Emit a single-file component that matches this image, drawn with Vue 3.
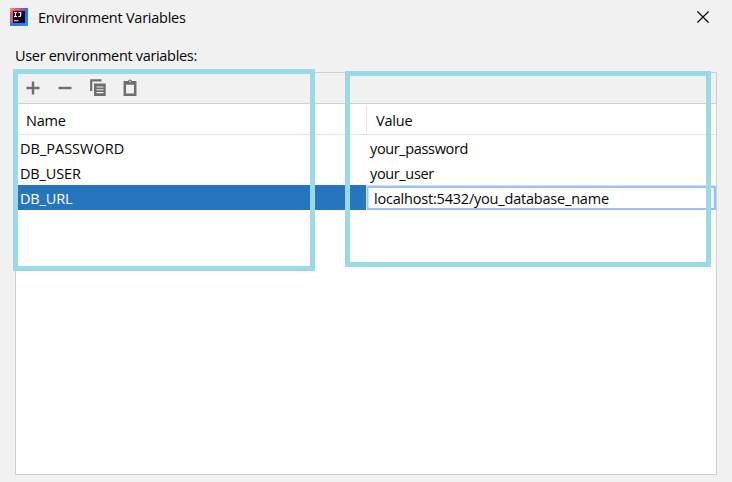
<script setup>
const variables = [
  { name: 'DB_PASSWORD', value: 'your_password' },
  { name: 'DB_USER', value: 'your_user' },
  { name: 'DB_URL', value: 'localhost:5432/you_database_name', editing: true },
]
</script>

<template>
  <div class="dialog">
    <header class="titlebar">
      <svg class="logo" width="18" height="18" viewBox="0 0 18 18">
        <defs>
          <linearGradient id="edge" x1="0" y1="0" x2="1" y2="1">
            <stop offset="0" stop-color="#ff9a60" />
            <stop offset=".2" stop-color="#f0566c" />
            <stop offset=".42" stop-color="#7a55c8" />
            <stop offset=".6" stop-color="#167df5" />
            <stop offset="1" stop-color="#2e8cff" />
          </linearGradient>
        </defs>
        <rect width="18" height="18" fill="url(#edge)" />
        <path d="M0 9L3 11V15L0 13Z" fill="#f2733c" opacity=".6" />
        <path d="M5 18L0 13V18Z" fill="#3d78ee" />
        <rect x="3" y="3" width="12" height="12" fill="#12051a" />
        <path d="M4 4.5H7M5.5 4.5V8.5M4 8.5H7M8.5 4.5H10.7V7.2Q10.7 8.5 9.5 8.5H8.3M4 12.8H8.5" fill="none" stroke="#fff" stroke-width="1.1" />
      </svg>
      <span class="title">Environment Variables</span>
      <svg class="close" width="12" height="12" viewBox="0 0 12 12">
        <path d="M.4.4L11.6 11.6M11.6.4L.4 11.6" stroke="#111" stroke-width="1.25" />
      </svg>
    </header>
    <div class="caption"><span>User environment variables:</span></div>
    <section class="panel">
      <div class="toolbar">
        <svg width="16" height="18" viewBox="0 0 16 18"><path d="M8 2.5V15.5M1.5 9H14.5" stroke="#6e6e6e" stroke-width="2.4" /></svg>
        <svg width="16" height="18" viewBox="0 0 16 18"><path d="M1.5 9H14.5" stroke="#6e6e6e" stroke-width="2.4" /></svg>
        <svg class="copy" width="16" height="18" viewBox="0 0 16 18">
          <path d="M1.2 12V1.4H11.5" fill="none" stroke="#6e6e6e" stroke-width="2.2" />
          <rect x="4" y="4.5" width="11.7" height="12.5" fill="#6e6e6e" />
          <path d="M6.5 8H13.5M6.5 10.8H13.5M6.5 13.6H13.5" stroke="#efefef" stroke-width="1.1" />
        </svg>
        <svg class="paste" width="14" height="18" viewBox="0 0 14 18">
          <path d="M1.8 3.3H12.2V15.7H1.8Z" fill="none" stroke="#6e6e6e" stroke-width="2.5" />
          <path d="M3 2H5Q5.2.5 7 .5T9 2H11V5.7H3Z" fill="#6e6e6e" />
          <rect x="6.2" y="1.8" width="1.6" height="1.3" fill="#dedede" />
        </svg>
      </div>
      <div class="row head">
        <div class="cell">Name</div>
        <div class="cell val">Value</div>
      </div>
      <div v-for="v in variables" :key="v.name" class="row" :class="{ selected: v.editing }">
        <div class="cell name">{{ v.name }}</div>
        <div class="cell val" :class="{ editor: v.editing }">{{ v.value }}</div>
      </div>
    </section>
    <div class="highlight names"></div>
    <div class="highlight values"></div>
  </div>
</template>

<style>
body { margin: 0; background: #f1f1f1; }
</style>

<style scoped>
.dialog {
  position: relative;
  box-sizing: border-box;
  width: 732px;
  height: 482px;
  padding: 0 15px 7px;
  display: flex;
  flex-direction: column;
  background: #f1f1f1;
  color: #050505;
  font: 14.5px/20px "Open Sans", "Noto Sans", sans-serif;
  white-space: pre;
  overflow: hidden;
}
.titlebar { display: flex; align-items: center; height: 34px; margin: 0 5px 0 -5px; }
.logo { flex: none; }
.title { margin-left: 10px; padding-top: 1px; letter-spacing: -0.24px; }
.close { margin-left: auto; margin-right: 3px; }
.caption { height: 38px; line-height: 44px; letter-spacing: -0.32px; }
.panel { flex: 1; border: 1px solid #cfcfcf; background: #fff; }
.toolbar {
  display: flex;
  align-items: center;
  gap: 16px;
  height: 30px;
  padding-left: 9px;
  border-bottom: 1px solid #cfcfcf;
  background: #f1f1f1;
}
.copy, .paste { margin-left: 1px; }
.row { display: grid; grid-template-columns: 350px 1fr; height: 25px; line-height: 28px; }
.cell { height: 25px; padding-left: 4px; letter-spacing: -0.36px; }
.name { letter-spacing: 0; }
.row:not(:nth-child(3)) .name { letter-spacing: -0.15px; }
.head { height: 30px; line-height: 33px; border-bottom: 1px solid #e3e3e3; }
.head .cell { padding-left: 10px; letter-spacing: -0.2px; }
.head .val { height: 28px; margin-top: 1px; line-height: 31px; padding-left: 9px; border-left: 1px solid #e3e3e3; box-sizing: border-box; }
.selected > .name { background: #2675bf; color: #fff; }
.selected > .editor {
  box-sizing: border-box;
  border: solid #97c3f3;
  border-width: 2px 2px 2px 1px;
  margin: 1px 0 0 1px;
  height: 24px;
  box-shadow: -1px -1px #cfe2f8, inset 1px 0 #cfe2f8, inset -1px 0 #e0ecfa;
  padding-left: 6px;
  line-height: 22px;
  letter-spacing: -0.2px;
}
.highlight { position: absolute; box-sizing: border-box; border: 5px solid #99d9e9; }
.names { left: 13px; top: 69px; width: 302px; height: 202px; }
.values { left: 345px; top: 71px; width: 366px; height: 196px; }
</style>
